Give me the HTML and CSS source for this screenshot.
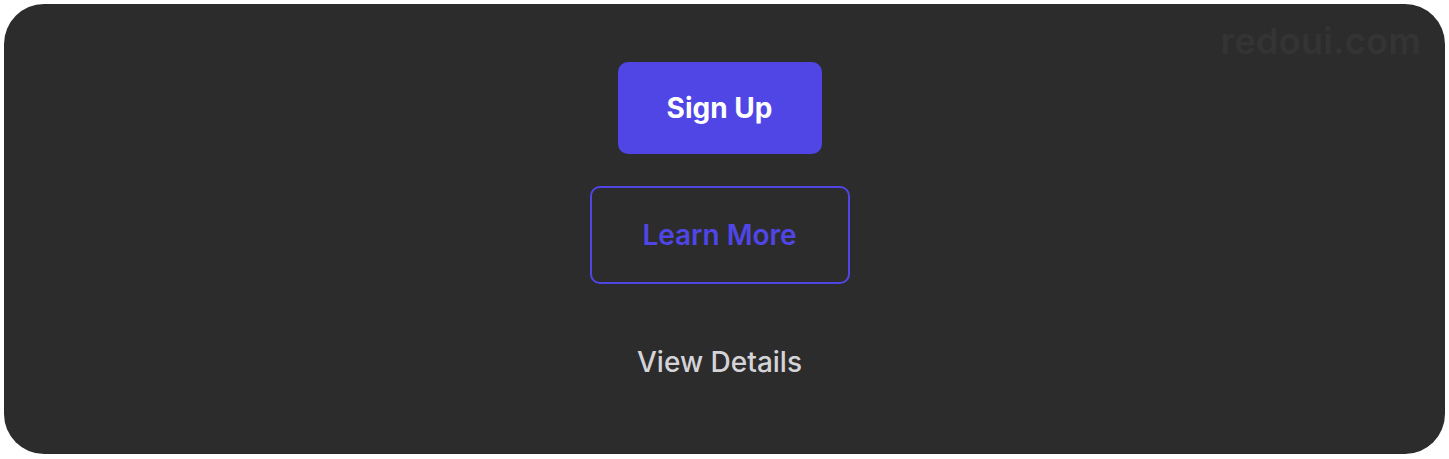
FILE: index.html
```html
<!DOCTYPE html>
<html>
<head>
<meta charset="utf-8">
<link rel="stylesheet" href="styles.css">
</head>
<body>
<div class="card">
  <div class="watermark">redoui.com</div>
  <button class="btn btn-primary">Sign Up</button>
  <button class="btn btn-outline">Learn More</button>
  <button class="btn btn-text">View Details</button>
</div>
</body>
</html>
```
FILE: styles.css
```css
html, body {
  margin: 0;
  padding: 0;
  background: #ffffff;
}
body {
  padding: 4px 4px 5px 4px;
  font-family: Inter, "Noto Sans", sans-serif;
}
.card {
  position: relative;
  height: 450px;
  background: #2c2c2c;
  border-radius: 40px;
  display: flex;
  flex-direction: column;
  align-items: center;
  padding-top: 58px;
  padding-right: 10px;
  gap: 32px;
  box-sizing: border-box;
}
.watermark {
  position: absolute;
  top: 15px;
  right: 24px;
  font-size: 36px;
  font-weight: 600;
  color: #343434;
  letter-spacing: 0.3px;
}
.btn {
  font-family: Inter, "Noto Sans", sans-serif;
  font-size: 28px;
  border: none;
  background: none;
  box-sizing: border-box;
  display: flex;
  align-items: center;
  justify-content: center;
  padding: 0;
}
.btn-primary {
  width: 204px;
  height: 92px;
  background: #4f46e5;
  color: #ffffff;
  font-weight: 700;
  border-radius: 10px;
}
.btn-outline {
  width: 260px;
  height: 98px;
  border: 2.5px solid #4f46e5;
  color: #4f46e5;
  font-weight: 600;
  border-radius: 10px;
}
.btn-text {
  width: 204px;
  height: 92px;
  color: #d4d4d8;
  font-weight: 500;
}
```
